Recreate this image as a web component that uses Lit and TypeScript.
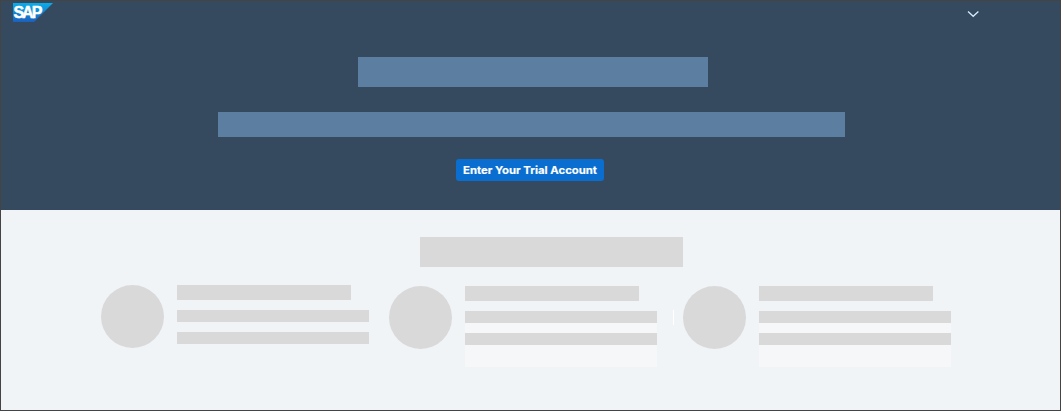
import { LitElement, html, css } from "lit";
import { customElement, property } from "lit/decorators.js";

@customElement("sap-logo")
class SapLogo extends LitElement {
  static styles = css`
    :host { display: block; width: 40px; height: 19px; }
    svg { display: block; }
    .word { font: 700 16px "Liberation Sans", Arial, sans-serif; fill: #fff; stroke: #fff; stroke-width: 0.5px; }
  `;
  render() {
    return html`<svg width="40" height="19" viewBox="0 0 40 19" role="img" aria-label="SAP">
      <defs>
        <linearGradient id="blue" x1="0" y1="0" x2="0" y2="1">
          <stop offset="0" stop-color="#08aeea" />
          <stop offset="1" stop-color="#1c60bd" />
        </linearGradient>
      </defs>
      <path d="M0 0H40L21 19H0Z" fill="url(#blue)" />
      <text class="word" x="0.4" y="15" textLength="29" lengthAdjust="spacing">SAP</text>
    </svg>`;
  }
}

@customElement("skeleton-card")
class SkeletonCard extends LitElement {
  @property({ type: Boolean, reflect: true }) panel = false;
  static styles = css`
    :host { display: flex; gap: 13px; align-items: flex-start; }
    .avatar { width: 63px; height: 63px; border-radius: 50%; background: #d9d9d9; }
    .lines { width: 192px; }
    .heading { width: 174px; height: 15px; background: #d9d9d9; }
    .body { display: flex; flex-direction: column; gap: 10px; margin-top: 10px; height: 56px; }
    .line { height: 12px; background: #d9d9d9; }
    :host([panel]) .body { background: #f5f7f9; }
  `;
  render() {
    return html`
      <div class="avatar"></div>
      <div class="lines">
        <div class="heading"></div>
        <div class="body">
          <div class="line"></div>
          <div class="line"></div>
        </div>
      </div>
    `;
  }
}

@customElement("app-root")
class AppRoot extends LitElement {
  static styles = css`
    :host {
      display: block;
      box-sizing: border-box;
      width: 1061px;
      height: 411px;
      border: 1px solid #444;
      background: #f0f4f7;
      overflow: hidden;
    }
    .hero {
      display: flex;
      flex-direction: column;
      height: 209px;
      background: #354a5f;
    }
    .bar {
      display: flex;
      justify-content: space-between;
      align-items: flex-start;
      height: 54px;
      padding: 2px 81px 0 12px;
      box-sizing: border-box;
      margin-bottom: 2px;
    }
    .chevron { display: block; margin-top: 7px; }
    .title { width: 350px; height: 30px; margin-left: 357px; background: #5b7ea1; }
    .subtitle { width: 627px; height: 25px; margin: 25px 0 22px 217px; background: #5b7ea1; }
    .enter {
      width: 148px;
      height: 22px;
      margin-left: 455px;
      padding: 0;
      border: 0;
      border-radius: 3px;
      background: #0a6ed1;
      display: flex;
      align-items: center;
      justify-content: center;
    }
    .enter svg { display: block; overflow: visible; }
    .label { font: 700 10.7px Inter, sans-serif; fill: #fff; stroke: #fff; stroke-width: 0.15px; }
    .section { width: 263px; height: 30px; margin: 27px 0 18px 419px; background: #d9d9d9; }
    .cards { display: flex; align-items: flex-start; margin-left: 100px; }
    .second { margin: 1px 16px 0 20px; }
    .third { margin: 1px 0 0 9px; }
    .divider { width: 1px; height: 15px; margin-top: 25px; background: #fff; }
  `;
  render() {
    return html`
      <header class="hero">
        <div class="bar">
          <sap-logo></sap-logo>
          <svg class="chevron" width="12" height="8" viewBox="0 0 12 8" fill="none">
            <path d="M1 1.5L6.2 6.3L11.4 1.5" stroke="#d5ecfa" stroke-width="1.3" />
          </svg>
        </div>
        <div class="title"></div>
        <div class="subtitle"></div>
        <button class="enter">
          <svg width="148" height="22">
            <text class="label" x="7" y="15" textLength="134" lengthAdjust="spacingAndGlyphs">Enter Your Trial Account</text>
          </svg>
        </button>
      </header>
      <main>
        <div class="section"></div>
        <div class="cards">
          <skeleton-card></skeleton-card>
          <skeleton-card class="second" panel></skeleton-card>
          <div class="divider"></div>
          <skeleton-card class="third" panel></skeleton-card>
        </div>
      </main>
    `;
  }
}
